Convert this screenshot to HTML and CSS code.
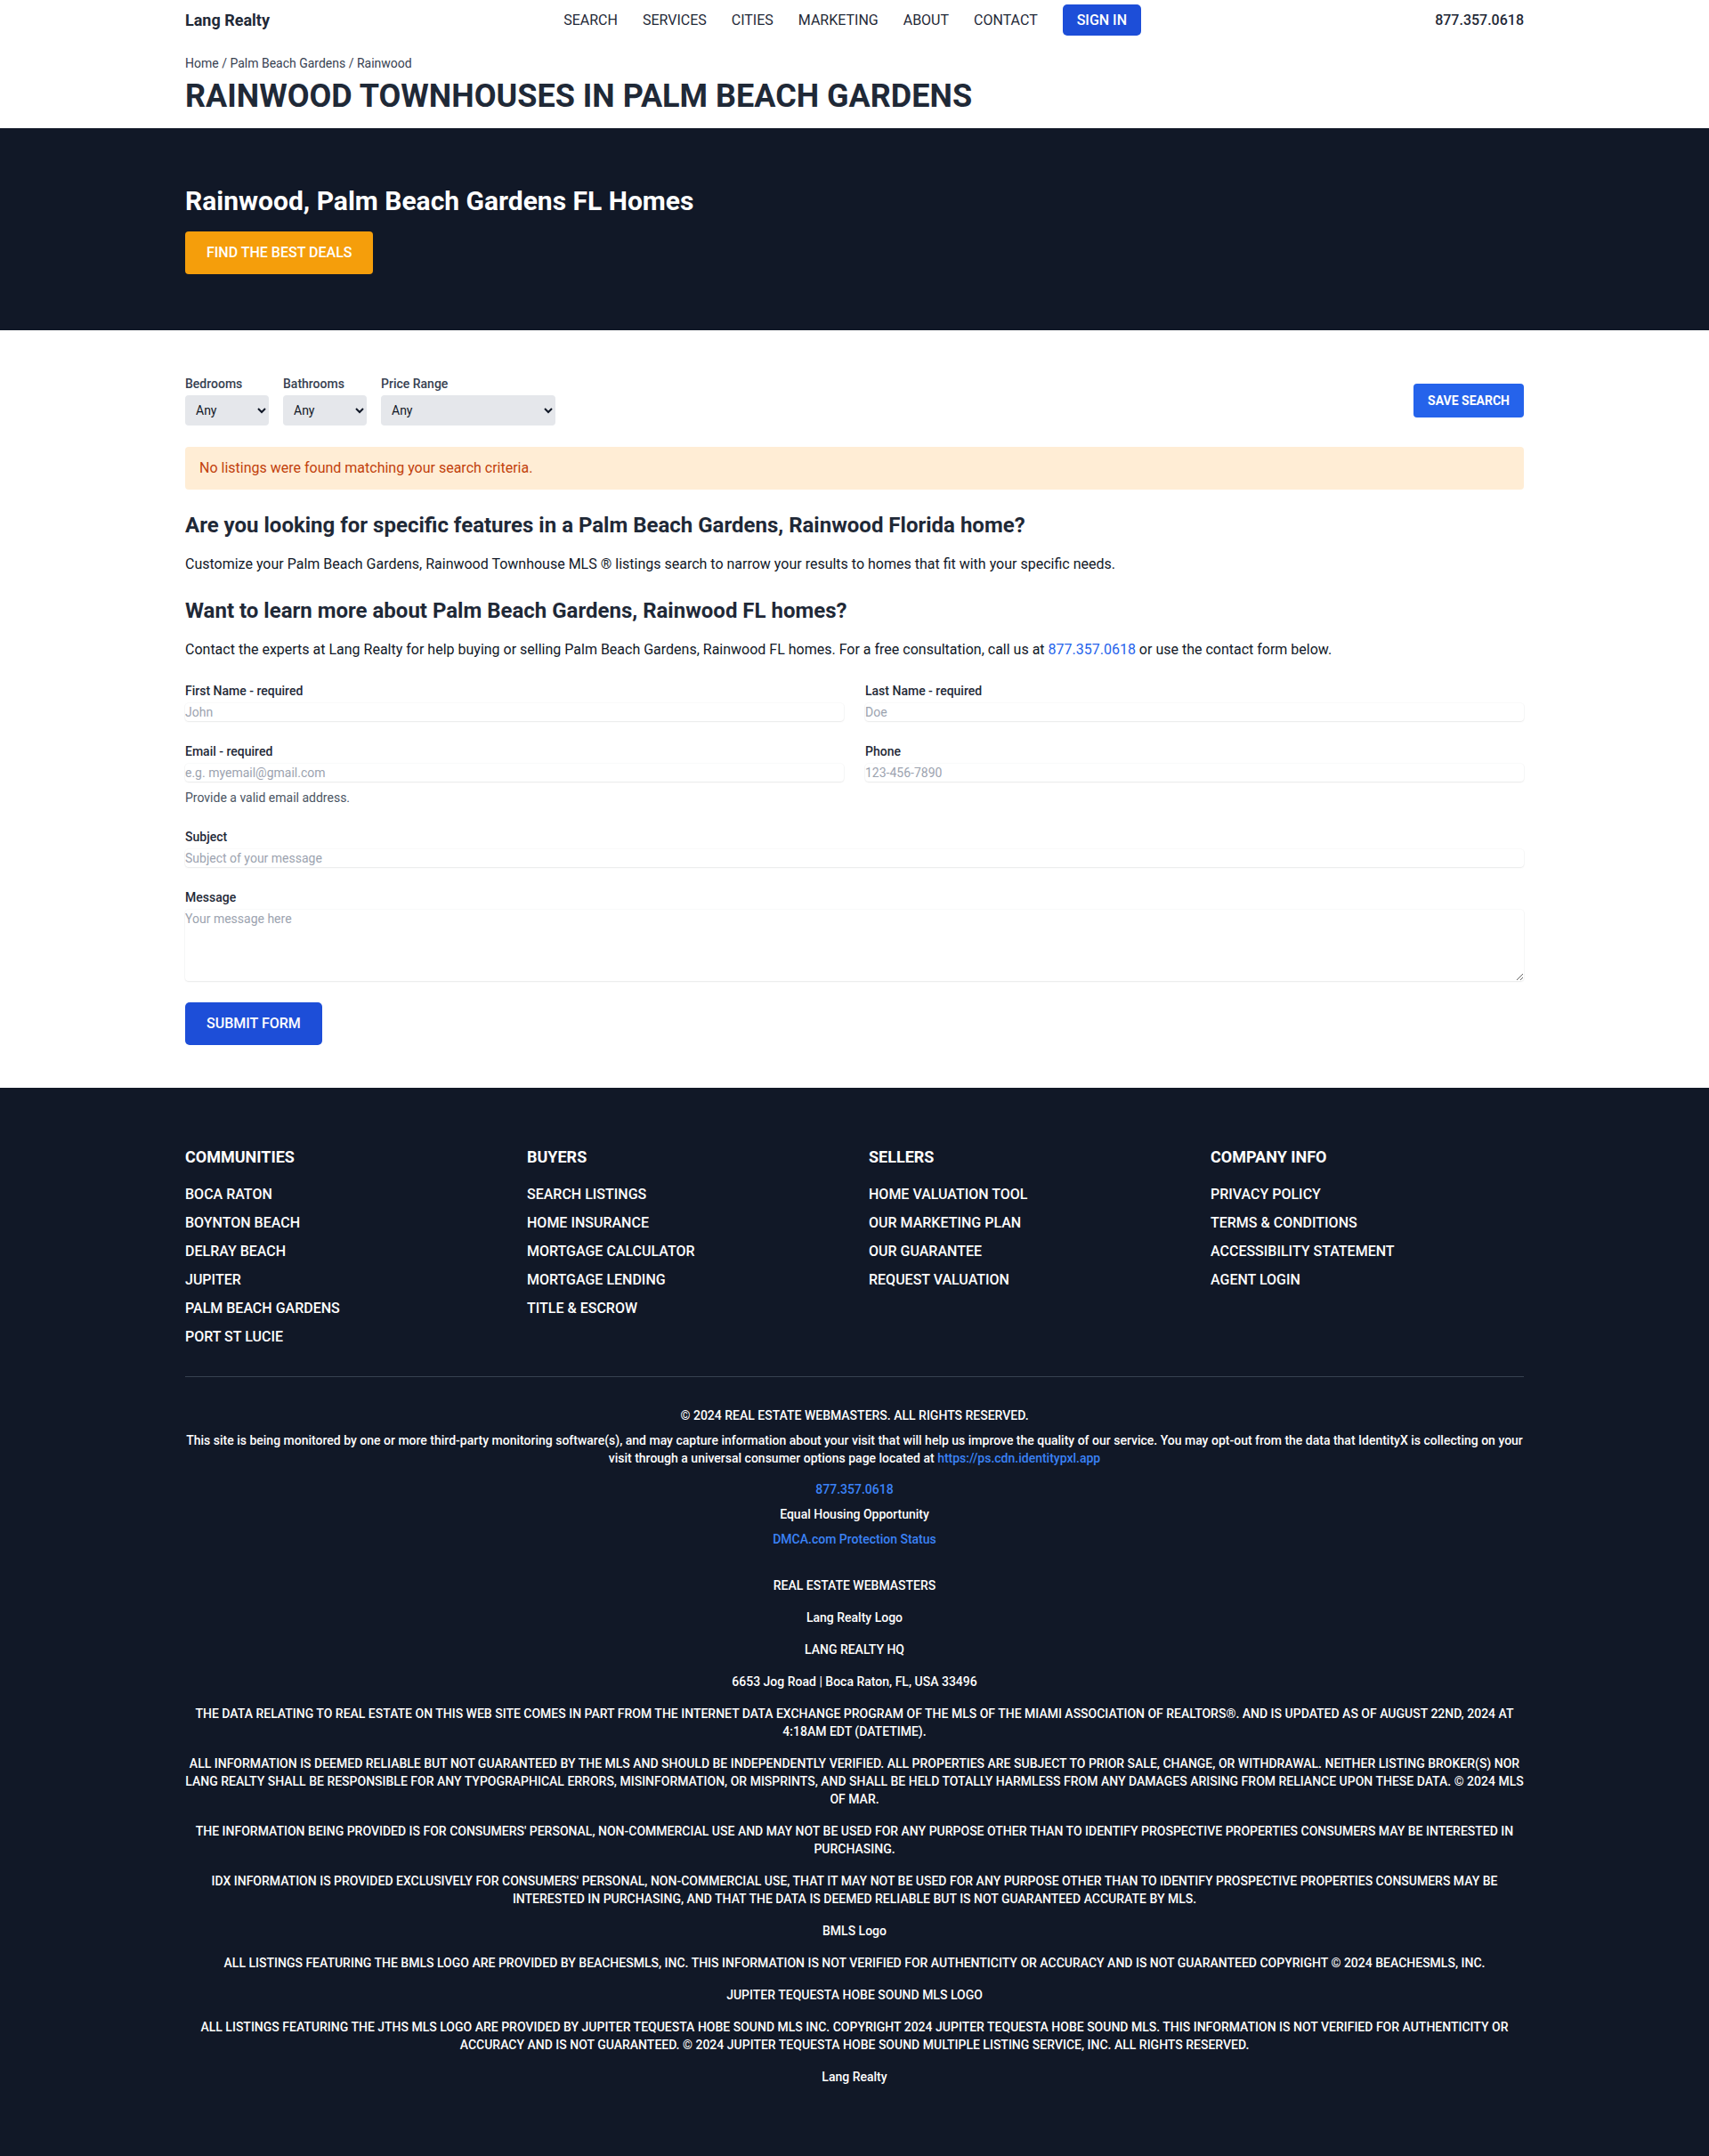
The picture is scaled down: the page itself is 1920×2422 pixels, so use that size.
FILE: index.html
```html
<!DOCTYPE html>
<html lang="en">
<head>
<meta charset="utf-8">
<title>Rainwood Townhouses in Palm Beach Gardens</title>
<link rel="stylesheet" href="styles.css">
</head>
<body>
<header class="site-header">
  <div class="container header-bar">
    <a class="logo" href="#">Lang Realty</a>
    <nav class="main-nav">
      <a href="#">Search</a>
      <a href="#">Services</a>
      <a href="#">Cities</a>
      <a href="#">Marketing</a>
      <a href="#">About</a>
      <a href="#">Contact</a>
      <a class="btn-signin" href="#">Sign In</a>
    </nav>
    <a class="header-phone" href="#">877.357.0618</a>
  </div>
  <div class="container page-title">
    <div class="breadcrumb">Home / Palm Beach Gardens / Rainwood</div>
    <h1>Rainwood Townhouses in Palm Beach Gardens</h1>
  </div>
</header>

<section class="hero">
  <div class="container">
    <h2>Rainwood, Palm Beach Gardens FL Homes</h2>
    <a class="btn-deals" href="#">Find the Best Deals</a>
  </div>
</section>

<main class="content">
  <div class="container">
    <div class="filters">
      <div class="filter-group">
        <div class="field">
          <label for="beds">Bedrooms</label>
          <select id="beds" class="sel sel-sm"><option>Any</option></select>
        </div>
        <div class="field">
          <label for="baths">Bathrooms</label>
          <select id="baths" class="sel sel-sm"><option>Any</option></select>
        </div>
        <div class="field">
          <label for="price">Price Range</label>
          <select id="price" class="sel sel-lg"><option>Any</option></select>
        </div>
      </div>
      <button class="btn-save" type="button">Save Search</button>
    </div>

    <div class="alert">No listings were found matching your search criteria.</div>

    <h2 class="section-title">Are you looking for specific features in a Palm Beach Gardens, Rainwood Florida home?</h2>
    <p class="copy">Customize your Palm Beach Gardens, Rainwood Townhouse MLS ® listings search to narrow your results to homes that fit with your specific needs.</p>

    <h2 class="section-title">Want to learn more about Palm Beach Gardens, Rainwood FL homes?</h2>
    <p class="copy">Contact the experts at Lang Realty for help buying or selling Palm Beach Gardens, Rainwood FL homes. For a free consultation, call us at <a href="#" class="inline-link">877.357.0618</a> or use the contact form below.</p>

    <form class="contact-form">
      <div class="form-grid">
        <div class="form-field">
          <label for="fn">First Name - required</label>
          <input id="fn" type="text" placeholder="John">
        </div>
        <div class="form-field">
          <label for="ln">Last Name - required</label>
          <input id="ln" type="text" placeholder="Doe">
        </div>
        <div class="form-field">
          <label for="em">Email - required</label>
          <input id="em" type="email" placeholder="e.g. myemail@gmail.com">
          <div class="help">Provide a valid email address.</div>
        </div>
        <div class="form-field">
          <label for="ph">Phone</label>
          <input id="ph" type="tel" placeholder="123-456-7890">
        </div>
        <div class="form-field full">
          <label for="sb">Subject</label>
          <input id="sb" type="text" placeholder="Subject of your message">
        </div>
        <div class="form-field full">
          <label for="ms">Message</label>
          <textarea id="ms" placeholder="Your message here"></textarea>
        </div>
      </div>
      <button class="btn-submit" type="button">Submit Form</button>
    </form>
  </div>
</main>

<footer class="site-footer">
  <div class="container">
    <div class="footer-cols">
      <div>
        <h3>Communities</h3>
        <ul>
          <li><a href="#">Boca Raton</a></li>
          <li><a href="#">Boynton Beach</a></li>
          <li><a href="#">Delray Beach</a></li>
          <li><a href="#">Jupiter</a></li>
          <li><a href="#">Palm Beach Gardens</a></li>
          <li><a href="#">Port St Lucie</a></li>
        </ul>
      </div>
      <div>
        <h3>Buyers</h3>
        <ul>
          <li><a href="#">Search Listings</a></li>
          <li><a href="#">Home Insurance</a></li>
          <li><a href="#">Mortgage Calculator</a></li>
          <li><a href="#">Mortgage Lending</a></li>
          <li><a href="#">Title &amp; Escrow</a></li>
        </ul>
      </div>
      <div>
        <h3>Sellers</h3>
        <ul>
          <li><a href="#">Home Valuation Tool</a></li>
          <li><a href="#">Our Marketing Plan</a></li>
          <li><a href="#">Our Guarantee</a></li>
          <li><a href="#">Request Valuation</a></li>
        </ul>
      </div>
      <div>
        <h3>Company Info</h3>
        <ul>
          <li><a href="#">Privacy Policy</a></li>
          <li><a href="#">Terms &amp; Conditions</a></li>
          <li><a href="#">Accessibility Statement</a></li>
          <li><a href="#">Agent Login</a></li>
        </ul>
      </div>
    </div>

    <div class="footer-bottom">
      <div class="fb-top">
        <p>© 2024 REAL ESTATE WEBMASTERS. ALL RIGHTS RESERVED.</p>
        <p>This site is being monitored by one or more third-party monitoring software(s), and may capture information about your visit that will help us improve the quality of our service. You may opt-out from the data that IdentityX is collecting on your visit through a universal consumer options page located at <a href="#">https://ps.cdn.identitypxl.app</a></p>
        <p class="fb-phone"><a href="#">877.357.0618</a></p>
        <p>Equal Housing Opportunity</p>
        <p><a href="#">DMCA.com Protection Status</a></p>
      </div>
      <div class="fb-legal">
        <p>REAL ESTATE WEBMASTERS</p>
        <p>Lang Realty Logo</p>
        <p>LANG REALTY HQ</p>
        <p>6653 Jog Road | Boca Raton, FL, USA 33496</p>
        <p>THE DATA RELATING TO REAL ESTATE ON THIS WEB SITE COMES IN PART FROM THE INTERNET DATA EXCHANGE PROGRAM OF THE MLS OF THE MIAMI ASSOCIATION OF REALTORS®. AND IS UPDATED AS OF AUGUST 22ND, 2024 AT 4:18AM EDT (DATETIME).</p>
        <p>ALL INFORMATION IS DEEMED RELIABLE BUT NOT GUARANTEED BY THE MLS AND SHOULD BE INDEPENDENTLY VERIFIED. ALL PROPERTIES ARE SUBJECT TO PRIOR SALE, CHANGE, OR WITHDRAWAL. NEITHER LISTING BROKER(S) NOR LANG REALTY SHALL BE RESPONSIBLE FOR ANY TYPOGRAPHICAL ERRORS, MISINFORMATION, OR MISPRINTS, AND SHALL BE HELD TOTALLY HARMLESS FROM ANY DAMAGES ARISING FROM RELIANCE UPON THESE DATA. © 2024 MLS OF MAR.</p>
        <p>THE INFORMATION BEING PROVIDED IS FOR CONSUMERS' PERSONAL, NON-COMMERCIAL USE AND MAY NOT BE USED FOR ANY PURPOSE OTHER THAN TO IDENTIFY PROSPECTIVE PROPERTIES CONSUMERS MAY BE INTERESTED IN PURCHASING.</p>
        <p>IDX INFORMATION IS PROVIDED EXCLUSIVELY FOR CONSUMERS' PERSONAL, NON-COMMERCIAL USE, THAT IT MAY NOT BE USED FOR ANY PURPOSE OTHER THAN TO IDENTIFY PROSPECTIVE PROPERTIES CONSUMERS MAY BE INTERESTED IN PURCHASING, AND THAT THE DATA IS DEEMED RELIABLE BUT IS NOT GUARANTEED ACCURATE BY MLS.</p>
        <p>BMLS Logo</p>
        <p>ALL LISTINGS FEATURING THE BMLS LOGO ARE PROVIDED BY BEACHESMLS, INC. THIS INFORMATION IS NOT VERIFIED FOR AUTHENTICITY OR ACCURACY AND IS NOT GUARANTEED COPYRIGHT © 2024 BEACHESMLS, INC.</p>
        <p>JUPITER TEQUESTA HOBE SOUND MLS LOGO</p>
        <p>ALL LISTINGS FEATURING THE JTHS MLS LOGO ARE PROVIDED BY JUPITER TEQUESTA HOBE SOUND MLS INC. COPYRIGHT 2024 JUPITER TEQUESTA HOBE SOUND MLS. THIS INFORMATION IS NOT VERIFIED FOR AUTHENTICITY OR ACCURACY AND IS NOT GUARANTEED. © 2024 JUPITER TEQUESTA HOBE SOUND MULTIPLE LISTING SERVICE, INC. ALL RIGHTS RESERVED.</p>
        <p>Lang Realty</p>
      </div>
    </div>
  </div>
</footer>
</body>
</html>
```

FILE: styles.css
```css
* { box-sizing: border-box; }

html, body {
  margin: 0;
  padding: 0;
}

body {
  font-family: Roboto, "Liberation Sans", Arial, sans-serif;
  color: #1f2937;
  background: #ffffff;
  font-size: 16px;
  line-height: 24px;
}

a { text-decoration: none; color: inherit; }

.container {
  max-width: 1536px;
  margin: 0 auto;
  padding: 0 16px;
}

/* Header */
.header-bar {
  display: flex;
  justify-content: space-between;
  align-items: center;
  height: 45px;
}

.logo {
  font-size: 18px;
  line-height: 28px;
  font-weight: 700;
  color: #1f2937;
}

.main-nav {
  display: flex;
  align-items: center;
  gap: 28px;
}

.main-nav a {
  text-transform: uppercase;
  font-size: 16px;
  line-height: 24px;
  color: #1f2937;
}

.main-nav a.btn-signin {
  background: #1d4ed8;
  color: #ffffff;
  font-weight: 500;
  padding: 6px 16px 5px;
  border-radius: 5px;
}

.header-phone {
  font-size: 16px;
  font-weight: 500;
  color: #1f2937;
}

.page-title {
  padding-top: 16px;
  padding-bottom: 16px;
}

.breadcrumb {
  font-size: 14px;
  line-height: 20px;
  color: #374151;
}

.page-title h1 {
  margin: 7px 0 0;
  font-size: 36px;
  line-height: 40px;
  font-weight: 700;
  text-transform: uppercase;
  color: #1f2937;
}

/* Hero */
.hero {
  background: #111827;
  padding: 64px 0 63px;
}

.hero h2 {
  margin: 0 0 16px;
  color: #ffffff;
  font-size: 30px;
  line-height: 36px;
  font-weight: 700;
}

.btn-deals {
  display: inline-block;
  background: #f59e0b;
  color: #ffffff;
  text-transform: uppercase;
  font-weight: 500;
  font-size: 16px;
  line-height: 24px;
  padding: 12px 24px;
  border-radius: 4px;
}

/* Main content */
.content {
  padding: 50px 0 48px;
}

.filters {
  display: flex;
  justify-content: space-between;
  align-items: center;
}

.filter-group {
  display: flex;
  gap: 16px;
}

.field {
  display: flex;
  flex-direction: column;
  gap: 3px;
}

.field label {
  font-size: 14px;
  line-height: 20px;
  font-weight: 500;
  color: #374151;
}

.sel {
  height: 34px;
  background-color: #e5e7eb;
  border: none;
  border-radius: 4px;
  font-family: inherit;
  font-size: 14px;
  color: #111827;
  padding: 0 8px;
}

.sel-sm { width: 94px; }
.sel-lg { width: 196px; }

.btn-save {
  background: #2563eb;
  color: #ffffff;
  border: none;
  border-radius: 4px;
  font-family: inherit;
  font-weight: 700;
  font-size: 14px;
  line-height: 20px;
  padding: 9px 16px;
  text-transform: uppercase;
}

.alert {
  margin-top: 24px;
  background: #ffedd5;
  color: #c2410c;
  padding: 12px 16px;
  border-radius: 4px;
  font-size: 16px;
  line-height: 24px;
}

.section-title {
  margin: 24px 0 0;
  font-size: 24px;
  line-height: 32px;
  font-weight: 700;
  color: #1f2937;
}

.copy {
  margin: 16px 0 0;
  font-size: 16px;
  line-height: 24px;
  color: #111827;
}

.inline-link { color: #2563eb; }

/* Form */
.contact-form {
  margin-top: 24px;
}

.form-grid {
  display: grid;
  grid-template-columns: 1fr 1fr;
  column-gap: 24px;
  row-gap: 24px;
}

.form-field {
  display: flex;
  flex-direction: column;
}

.form-field.full { grid-column: 1 / -1; }

.form-field label {
  font-size: 14px;
  line-height: 20px;
  font-weight: 500;
  color: #1f2937;
}

.form-field input,
.form-field textarea {
  margin-top: 4px;
  border: none;
  outline: none;
  padding: 0;
  font-family: inherit;
  font-size: 14px;
  line-height: 20px;
  color: #111827;
  background: #ffffff;
  border-radius: 4px;
  box-shadow: 0 0 0 1px rgba(17, 24, 39, 0.025), 0 1px 2px 0 rgba(0, 0, 0, 0.07);
}

.form-field input { height: 20px; }

.form-field textarea {
  height: 80px;
  resize: vertical;
  display: block;
}

.form-field input::placeholder,
.form-field textarea::placeholder {
  color: #9ca3af;
}

.help {
  margin-top: 8px;
  font-size: 14px;
  line-height: 20px;
  color: #4b5563;
}

.btn-submit {
  margin-top: 24px;
  background: #1d4ed8;
  color: #ffffff;
  border: none;
  border-radius: 5px;
  font-family: inherit;
  font-weight: 500;
  font-size: 16px;
  line-height: 24px;
  padding: 12px 24px;
  text-transform: uppercase;
}

/* Footer */
.site-footer {
  background: #111827;
  color: #ffffff;
  padding: 64px 0 80px;
}

.footer-cols {
  display: grid;
  grid-template-columns: repeat(4, 1fr);
  gap: 32px;
  padding-bottom: 32px;
  border-bottom: 1px solid #374151;
}

.footer-cols h3 {
  margin: 0;
  font-size: 18px;
  line-height: 28px;
  font-weight: 700;
  text-transform: uppercase;
}

.footer-cols ul {
  list-style: none;
  margin: 16px 0 0;
  padding: 0;
}

.footer-cols li + li { margin-top: 8px; }

.footer-cols a {
  font-size: 16px;
  line-height: 24px;
  font-weight: 500;
  text-transform: uppercase;
  color: #ffffff;
}

.footer-bottom {
  padding-top: 33px;
  text-align: center;
  font-size: 14px;
  line-height: 20px;
  font-weight: 500;
}

.footer-bottom p { margin: 0; }

.footer-bottom a { color: #3b82f6; }

.fb-top p + p { margin-top: 8px; }

.fb-top p.fb-phone { margin-top: 15px; }

.fb-legal { margin-top: 32px; }

.fb-legal p + p { margin-top: 16px; }
```
